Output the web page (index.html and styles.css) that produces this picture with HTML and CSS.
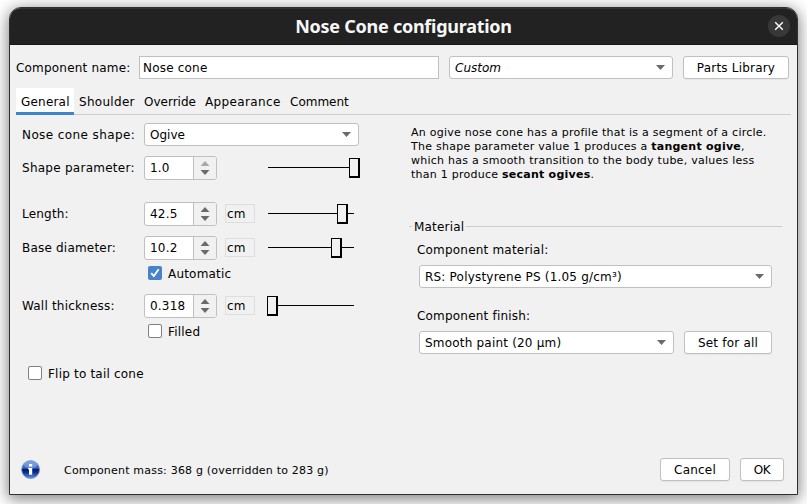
FILE: index.html
```html
<!DOCTYPE html>
<html lang="en">
<head>
<meta charset="utf-8">
<title>Nose Cone configuration</title>
<link rel="stylesheet" href="styles.css">
</head>
<body>
<div class="window">
  <header class="titlebar">
    <h1><span>Nose Cone configuration</span></h1>
    <div class="close"><svg width="10" height="10" viewBox="0 0 10 10"><path d="M1.2 1.2 8.8 8.8M8.8 1.2 1.2 8.8" stroke="#fff" stroke-width="1.4"/></svg></div>
  </header>
  <main class="content">
    <div class="name-row">
      <span class="name-label">Component name:</span>
      <div class="input">Nose cone</div>
      <div class="combo preset"><i>Custom</i><b class="arrow"></b></div>
      <div class="button library">Parts Library</div>
    </div>
    <nav class="tabs">
      <span class="tab active">General</span><span class="tab shoulder">Shoulder</span><span class="tab override">Override</span><span class="tab appearance">Appearance</span><span class="tab">Comment</span>
    </nav>
    <div class="panels">
      <section class="left">
        <div class="row shape"><span class="label">Nose cone shape:</span><div class="combo">Ogive<b class="arrow"></b></div></div>
        <div class="row param"><span class="label">Shape parameter:</span><div class="spinner"><span>1.0</span><div class="steps"><b class="up off"></b><b class="arrow"></b></div></div><div class="unit blank"></div><div class="slider"><div class="thumb max"></div></div></div>
        <div class="row length"><span class="label">Length:</span><div class="spinner"><span>42.5</span><div class="steps"><b class="up"></b><b class="arrow"></b></div></div><div class="unit">cm</div><div class="slider"><div class="thumb high"></div></div></div>
        <div class="row diameter"><span class="label">Base diameter:</span><div class="spinner"><span>10.2</span><div class="steps"><b class="up"></b><b class="arrow"></b></div></div><div class="unit">cm</div><div class="slider"><div class="thumb mid"></div></div></div>
        <div class="check"><div class="box on"><svg width="14" height="14" viewBox="0 0 14 14"><path d="M3.2 7.2 5.8 10 10.7 3.3" fill="none" stroke="#fff" stroke-width="1.8"/></svg></div><span>Automatic</span></div>
        <div class="row wall"><span class="label">Wall thickness:</span><div class="spinner"><span>0.318</span><div class="steps"><b class="up"></b><b class="arrow"></b></div></div><div class="unit">cm</div><div class="slider"><div class="thumb min"></div></div></div>
        <div class="check"><div class="box"></div><span>Filled</span></div>
        <div class="check flip"><div class="box"></div><span>Flip to tail cone</span></div>
      </section>
      <section class="right">
        <p class="description">An ogive nose cone has a profile that is a segment of a circle.<br>The shape parameter value 1 produces a <strong>tangent ogive</strong>,<br>which has a smooth transition to the body tube, values less<br>than 1 produce <strong>secant ogives</strong>.</p>
        <div class="group-title"><span>Material</span></div>
        <div class="group">
          <div class="group-label">Component material:</div>
          <div class="combo">RS: Polystyrene PS (1.05 g/cm³)<b class="arrow"></b></div>
          <div class="group-label finish-label">Component finish:</div>
          <div class="finish"><div class="combo">Smooth paint (20 µm)<b class="arrow"></b></div><div class="button">Set for all</div></div>
        </div>
      </section>
    </div>
    <footer class="footer">
      <svg class="info" width="20" height="20" viewBox="0 0 20 20">
        <defs><linearGradient id="ball" x1="0" y1="0" x2="0" y2="1"><stop offset="0" stop-color="#5d8be0"/><stop offset=".42" stop-color="#3461bd"/><stop offset=".5" stop-color="#03196c"/><stop offset=".65" stop-color="#0c2f8c"/><stop offset="1" stop-color="#5b98ef"/></linearGradient></defs>
        <circle cx="9.6" cy="9.6" r="9" fill="url(#ball)" stroke="#8798bf" stroke-width=".8"/>
        <ellipse cx="9.6" cy="4.8" rx="6.6" ry="3.6" fill="#a9c5f5" opacity=".45"/>
        <path d="M8 4h3.2v2.6H8zM7.2 8h4v6.8H8V9.6h-.8z" fill="#fff"/>
      </svg>
      <span class="mass">Component mass: 368 g (overridden to 283 g)</span>
      <div class="button cancel">Cancel</div>
      <div class="button ok">OK</div>
    </footer>
  </main>
</div>
</body>
</html>
```
FILE: styles.css
```css
* { box-sizing: border-box; }
body {
  margin: 0;
  padding: 7px 9px;
  height: 504px;
  overflow: hidden;
  background: #fff;
  color: #000;
  font: 12px/16px "DejaVu Sans", sans-serif;
  letter-spacing: .2px;
  white-space: nowrap;
}
.window {
  width: 789px;
  height: 488px;
  border: 1px solid #303030;
  border-radius: 12px 12px 0 0;
  background: #f1f1f1;
  box-shadow: 0 3px 15px 1px rgba(0, 0, 0, .5);
}
.titlebar {
  display: flex;
  align-items: center;
  height: 37px;
  padding: 0 7px 0 29px;
  border-top: 1px solid #343434;
  border-bottom: 1px solid #161616;
  border-radius: 11px 11px 0 0;
  background: #222;
  color: #f7f7f7;
}
h1 {
  flex: 1;
  margin: 0 0 2px;
  text-align: center;
  font: bold 18px/24px "Noto Sans", sans-serif;
  letter-spacing: -.26px;
}
.close {
  display: flex;
  align-items: center;
  justify-content: center;
  width: 22px;
  height: 22px;
  margin-bottom: 1px;
  border-radius: 50%;
  background: #383838;
}
.content { padding: 11px 6px 0; }
.name-row { display: flex; height: 23px; align-items: center; }
.name-label { width: 123px; }
.input {
  width: 300px;
  height: 23px;
  padding: 3px;
  border: 1px solid #c0c0c0;
  background: #fff;
}
.combo, .button {
  height: 23px;
  border: 1px solid #c0c0c0;
  border-radius: 3px;
  background: #fff;
}
.combo {
  display: flex;
  align-items: center;
  justify-content: space-between;
  padding: 0 7px 0 5px;
}
.button { text-align: center; line-height: 22px; box-shadow: 0 1px 1px rgba(0, 0, 0, .05); }
.preset { width: 224px; margin: 0 10px; letter-spacing: 0; }
.library { width: 106px; }
.arrow {
  width: 9px;
  height: 5px;
  background: #6b6b6b;
  clip-path: polygon(0 0, 100% 0, 50% 100%);
}
.tabs {
  display: flex;
  width: 775px;
  height: 27px;
  margin-top: 9px;
  border-bottom: 1px solid #cdcdcd;
  line-height: 28px;
}
.tab { padding-left: 5px; }
.active {
  width: 58px;
  height: 27px;
  background: #fff;
  border-bottom: 3px solid #3f83cc;
}
.shoulder { width: 65px; letter-spacing: .3px; }
.override { width: 61px; letter-spacing: 0; }
.appearance { width: 85px; letter-spacing: .36px; }
.tab:last-child { letter-spacing: 0; }
.panels { display: flex; height: 343px; padding-top: 8px; }
.left { width: 395px; padding-left: 6px; }
.row { display: flex; align-items: center; height: 24px; }
.label { width: 122px; }
.shape { height: 23px; }
.shape .label { letter-spacing: .4px; }
.param .label { letter-spacing: .26px; }
.shape .combo { width: 215px; letter-spacing: 0; }
.param { margin-top: 10px; }
.length { margin-top: 22px; }
.diameter { margin-top: 10px; }
.wall { margin-top: 14px; }
.spinner {
  display: flex;
  width: 73px;
  height: 24px;
  border: 1px solid #c0c0c0;
  border-radius: 3px;
  background: #fff;
  overflow: hidden;
}
.spinner span { width: 48px; padding-left: 5px; line-height: 22px; }
.steps {
  display: flex;
  flex-direction: column;
  align-items: center;
  justify-content: center;
  gap: 4px;
  width: 23px;
  border-left: 1px solid #c0c0c0;
  background: #f1f1f1;
}
.up {
  width: 9px;
  height: 5px;
  background: #6b6b6b;
  clip-path: polygon(50% 0, 100% 100%, 0 100%);
}
.off { background: #aaa; }
.unit {
  width: 30px;
  height: 19px;
  margin: 0 13px 1px 8px;
  padding-left: 1px;
  border: 1px solid #dedede;
  line-height: 19px;
}
.blank { border-color: transparent; }
.slider {
  position: relative;
  width: 86px;
  height: 1px;
  margin-bottom: 1px;
  background: #000;
}
.thumb {
  position: absolute;
  top: -9px;
  width: 11px;
  height: 20px;
  border: solid #000;
  border-width: 1px 2px 2px 1px;
  background: #f1f1f1;
}
.max { left: 81px; }
.high { left: 69px; }
.mid { left: 63px; }
.min { left: -1px; }
.check { display: flex; align-items: center; height: 14px; margin: 6px 0 0 126px; }
.check span { padding-top: 2px; }
.box {
  width: 14px;
  height: 14px;
  margin-right: 6px;
  border: 1px solid #808080;
  border-radius: 2px;
  background: #fff;
}
.on { display: flex; border: 0; background: #4683c9; }
.flip { margin: 28px 0 0 6px; }
.right { width: 380px; }
.description { margin: 3px 0 0; font-size: 11px; line-height: 14px; letter-spacing: .25px; }
.group-title { display: flex; align-items: center; height: 16px; margin: 36px 0 0 -2px; width: 373px; }
.group-title::before, .group-title::after { content: ""; height: 1px; width: 3px; background: #cdcdcd; }
.group-title::after { width: 316px; }
.group-title span { width: 54px; padding: 1px 0 0 2px; }
.group { width: 361px; padding-left: 8px; }
.group-label { height: 16px; margin: 8px 0 7px -2px; }
.finish-label { margin-top: 20px; }
.finish { display: flex; gap: 10px; }
.finish .combo { width: 255px; }
.finish .button { width: 88px; }
.footer { display: flex; align-items: center; height: 23px; }
.info { margin-left: 5px; }
.mass { width: 596px; margin-left: 23px; padding-top: 2px; font-size: 11px; }
.cancel { width: 70px; }
.ok { width: 44px; margin-left: 10px; letter-spacing: -.3px; }
```
